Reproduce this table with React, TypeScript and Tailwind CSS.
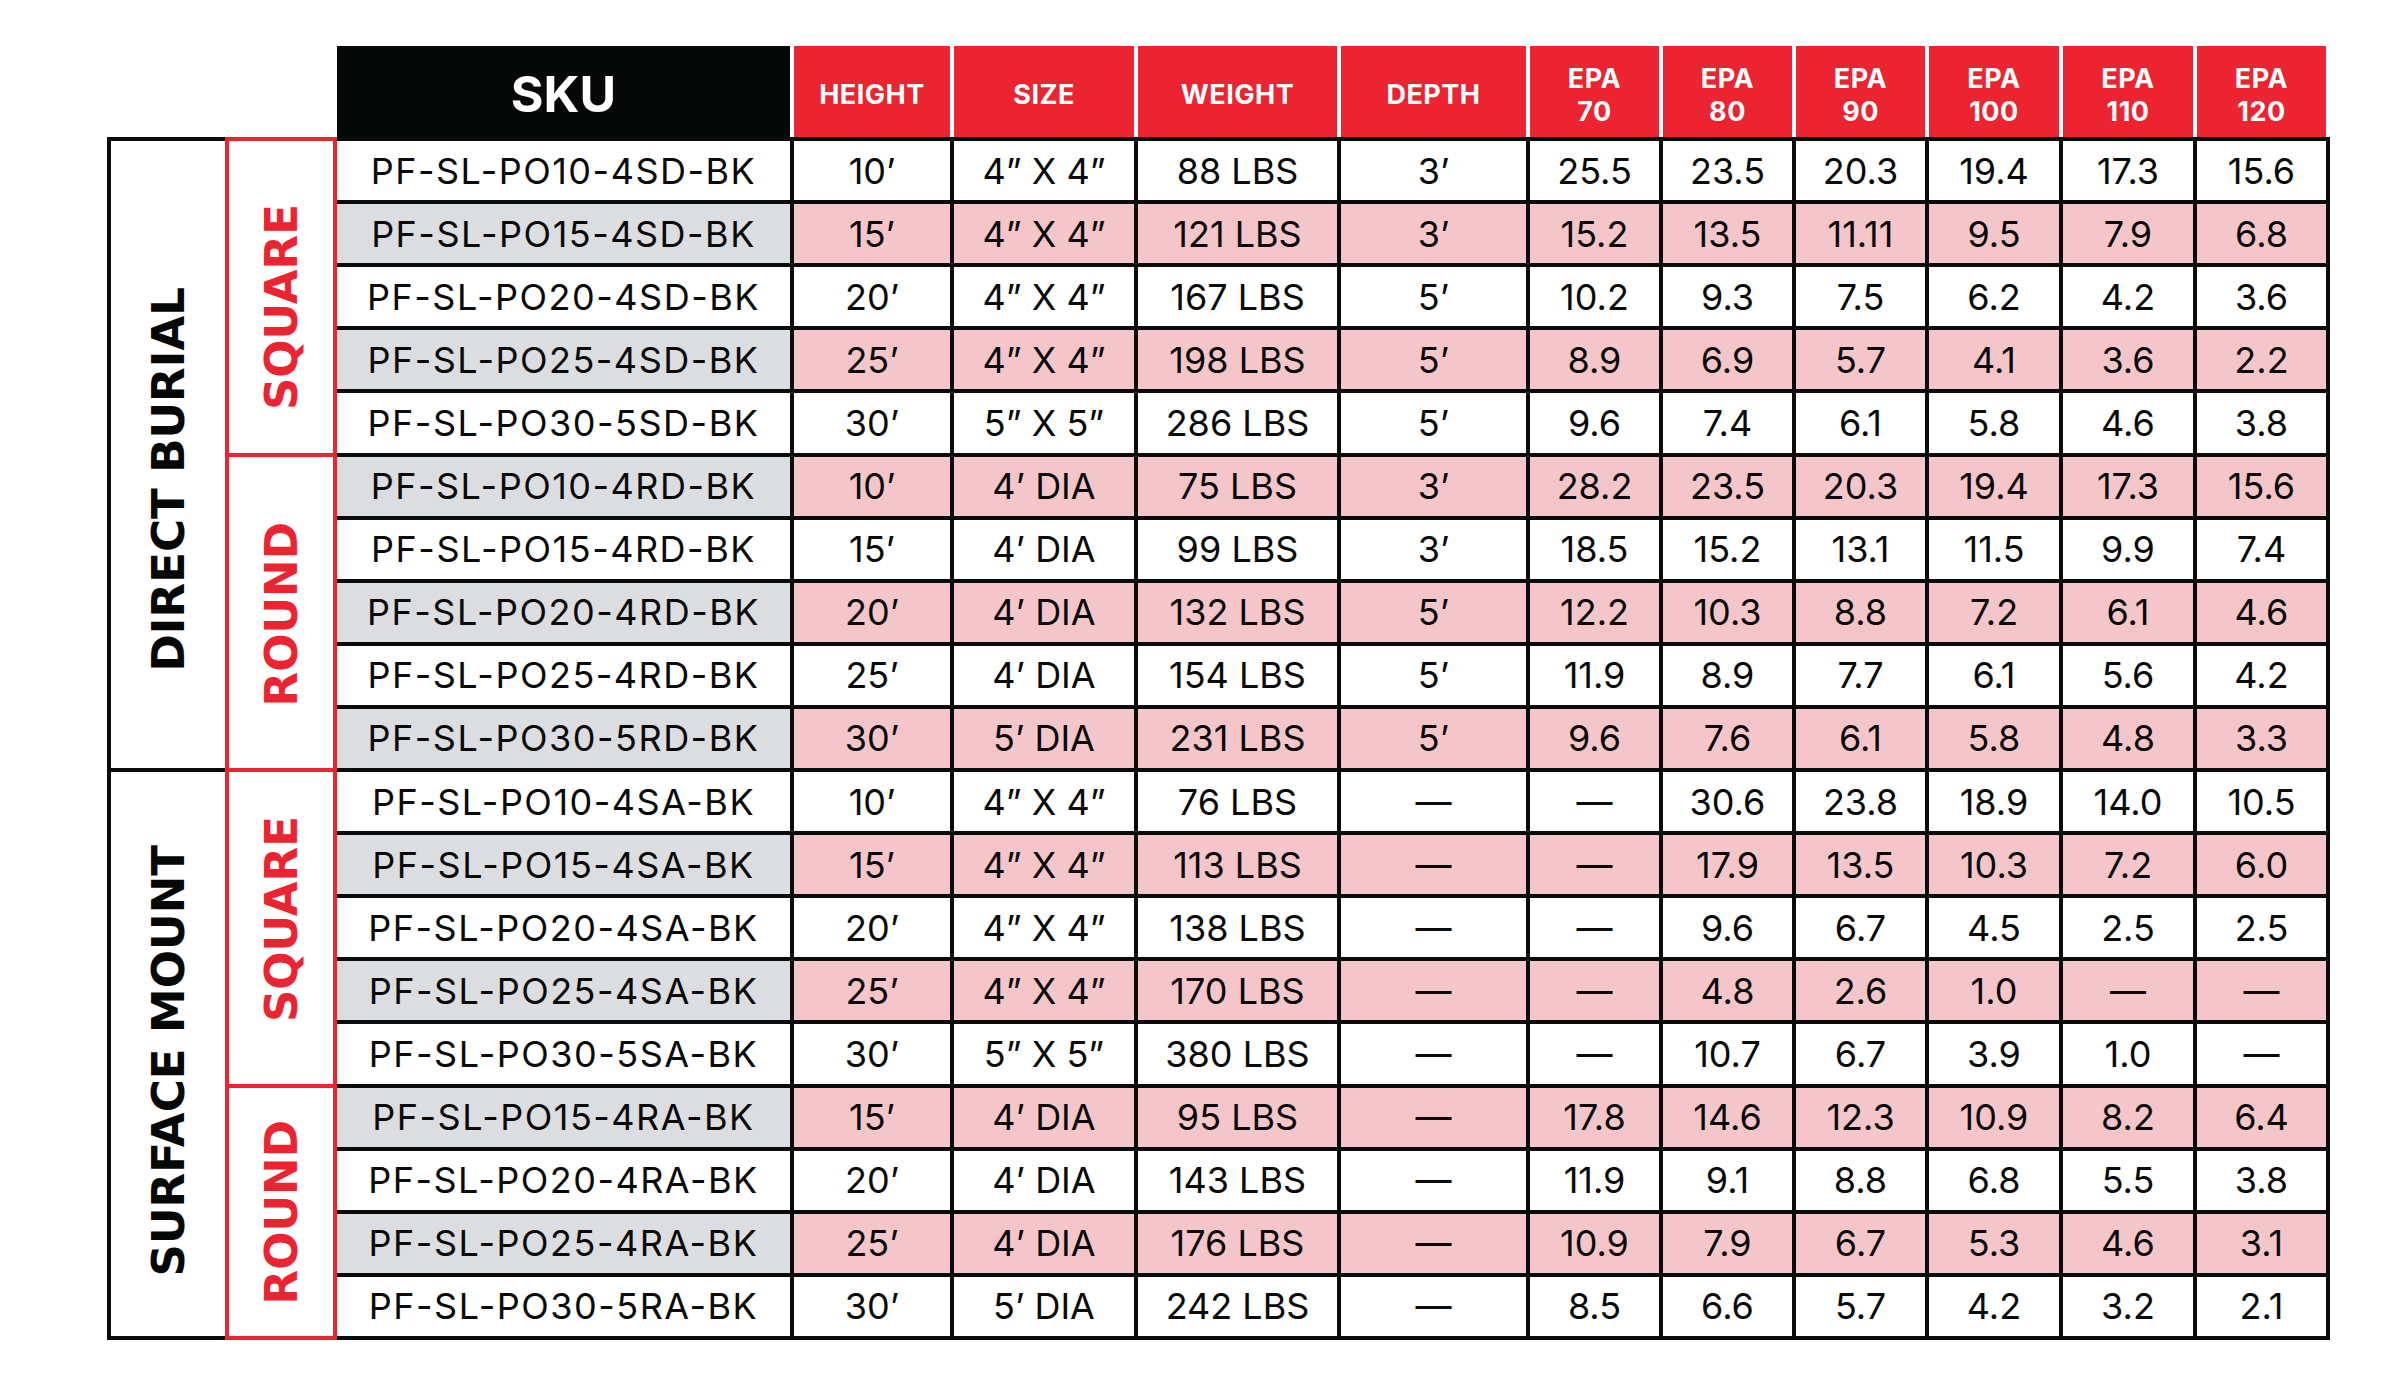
import React from 'react'

const rows: string[][] = [
    ['PF-SL-PO10-4SD-BK', '10’', '4” X 4”', '88 LBS', '3’', '25.5', '23.5', '20.3', '19.4', '17.3', '15.6'],
    ['PF-SL-PO15-4SD-BK', '15’', '4” X 4”', '121 LBS', '3’', '15.2', '13.5', '11.11', '9.5', '7.9', '6.8'],
    ['PF-SL-PO20-4SD-BK', '20’', '4” X 4”', '167 LBS', '5’', '10.2', '9.3', '7.5', '6.2', '4.2', '3.6'],
    ['PF-SL-PO25-4SD-BK', '25’', '4” X 4”', '198 LBS', '5’', '8.9', '6.9', '5.7', '4.1', '3.6', '2.2'],
    ['PF-SL-PO30-5SD-BK', '30’', '5” X 5”', '286 LBS', '5’', '9.6', '7.4', '6.1', '5.8', '4.6', '3.8'],
    ['PF-SL-PO10-4RD-BK', '10’', '4’ DIA', '75 LBS', '3’', '28.2', '23.5', '20.3', '19.4', '17.3', '15.6'],
    ['PF-SL-PO15-4RD-BK', '15’', '4’ DIA', '99 LBS', '3’', '18.5', '15.2', '13.1', '11.5', '9.9', '7.4'],
    ['PF-SL-PO20-4RD-BK', '20’', '4’ DIA', '132 LBS', '5’', '12.2', '10.3', '8.8', '7.2', '6.1', '4.6'],
    ['PF-SL-PO25-4RD-BK', '25’', '4’ DIA', '154 LBS', '5’', '11.9', '8.9', '7.7', '6.1', '5.6', '4.2'],
    ['PF-SL-PO30-5RD-BK', '30’', '5’ DIA', '231 LBS', '5’', '9.6', '7.6', '6.1', '5.8', '4.8', '3.3'],
    ['PF-SL-PO10-4SA-BK', '10’', '4” X 4”', '76 LBS', '—', '—', '30.6', '23.8', '18.9', '14.0', '10.5'],
    ['PF-SL-PO15-4SA-BK', '15’', '4” X 4”', '113 LBS', '—', '—', '17.9', '13.5', '10.3', '7.2', '6.0'],
    ['PF-SL-PO20-4SA-BK', '20’', '4” X 4”', '138 LBS', '—', '—', '9.6', '6.7', '4.5', '2.5', '2.5'],
    ['PF-SL-PO25-4SA-BK', '25’', '4” X 4”', '170 LBS', '—', '—', '4.8', '2.6', '1.0', '—', '—'],
    ['PF-SL-PO30-5SA-BK', '30’', '5” X 5”', '380 LBS', '—', '—', '10.7', '6.7', '3.9', '1.0', '—'],
    ['PF-SL-PO15-4RA-BK', '15’', '4’ DIA', '95 LBS', '—', '17.8', '14.6', '12.3', '10.9', '8.2', '6.4'],
    ['PF-SL-PO20-4RA-BK', '20’', '4’ DIA', '143 LBS', '—', '11.9', '9.1', '8.8', '6.8', '5.5', '3.8'],
    ['PF-SL-PO25-4RA-BK', '25’', '4’ DIA', '176 LBS', '—', '10.9', '7.9', '6.7', '5.3', '4.6', '3.1'],
    ['PF-SL-PO30-5RA-BK', '30’', '5’ DIA', '242 LBS', '—', '8.5', '6.6', '5.7', '4.2', '3.2', '2.1'],
]

const epa = ['70', '80', '90', '100', '110', '120']

const vertical = "[writing-mode:vertical-rl] rotate-180 font-['DejaVu_Sans',sans-serif] font-bold text-[45px] leading-none whitespace-nowrap"

export default function App() {
    return (
        <div className="w-[2400px] h-[1400px] bg-white pt-[46px] pl-[107px] font-['Inter',sans-serif] text-[#0a0a0a]">
            {/* header */}
            <div className="flex">
                <div className="w-[230px] shrink-0" />
                <div className="grid grid-cols-[453px_156px_180px_199px_185px_129px_129px_129px_130px_130px_129px] gap-x-[4px] h-[91px] text-white font-bold">
                    <div className="bg-[#060808] flex items-center justify-center text-[50px] pt-[6px]">SKU</div>
                    {['HEIGHT', 'SIZE', 'WEIGHT', 'DEPTH'].map((h) => (
                        <div key={h} className="bg-[#ec2330] flex items-center justify-center text-[27px] tracking-[0.5px] pt-[8px]">{h}</div>
                    ))}
                    {epa.map((e) => (
                        <div key={e} className="bg-[#ec2330] flex flex-col items-center justify-center text-[27px] leading-[33px] tracking-[0.5px] pt-[7px]">
                            <span>EPA</span>
                            <span>{e}</span>
                        </div>
                    ))}
                </div>
            </div>

            {/* body */}
            <div className="grid grid-cols-[114px_104px_453px_156px_180px_199px_185px_129px_129px_129px_130px_130px_129px] grid-rows-[repeat(19,minmax(0,1fr))] gap-[4px] p-[4px] bg-[#0a0c0c] w-[2223px] h-[1203px]">
                <div className="col-start-1 row-start-1 row-span-10 bg-white flex items-center justify-center">
                    <span className={vertical + ' mt-[50px] text-[#060808]'}>DIRECT BURIAL</span>
                </div>
                <div className="col-start-1 row-start-11 row-span-9 bg-white flex items-center justify-center">
                    <span className={vertical + ' mt-[14px] text-[#060808]'}>SURFACE MOUNT</span>
                </div>
                <div className="col-start-2 row-start-1 row-span-5 bg-white flex items-center justify-center outline-4 outline-[#ec2330]">
                    <span className={vertical + ' mt-[20px] text-[#ec2330]'}>SQUARE</span>
                </div>
                <div className="col-start-2 row-start-6 row-span-5 bg-white flex items-center justify-center outline-4 outline-[#ec2330]">
                    <span className={vertical + ' mt-[4px] text-[#ec2330]'}>ROUND</span>
                </div>
                <div className="col-start-2 row-start-11 row-span-5 bg-white flex items-center justify-center outline-4 outline-[#ec2330]">
                    <span className={vertical + ' mb-[18px] text-[#ec2330]'}>SQUARE</span>
                </div>
                <div className="col-start-2 row-start-16 row-span-4 bg-white flex items-center justify-center outline-4 outline-[#ec2330]">
                    <span className={vertical + ' text-[#ec2330]'}>ROUND</span>
                </div>

                {rows.map((r, i) => {
                    const shaded = i % 2 === 1
                    return r.map((v, j) => (
                        <div
                            key={i + '-' + j}
                            className={
                                'flex items-center justify-center text-[36px] leading-none ' +
                                (j === 0 ? 'tracking-[1.5px] ' : '') +
                                (shaded ? (j === 0 ? 'bg-[#dcdde0]' : 'bg-[#f4c6ca]') : 'bg-white')
                            }
                        >
                            {v}
                        </div>
                    ))
                })}
            </div>
        </div>
    )
}
